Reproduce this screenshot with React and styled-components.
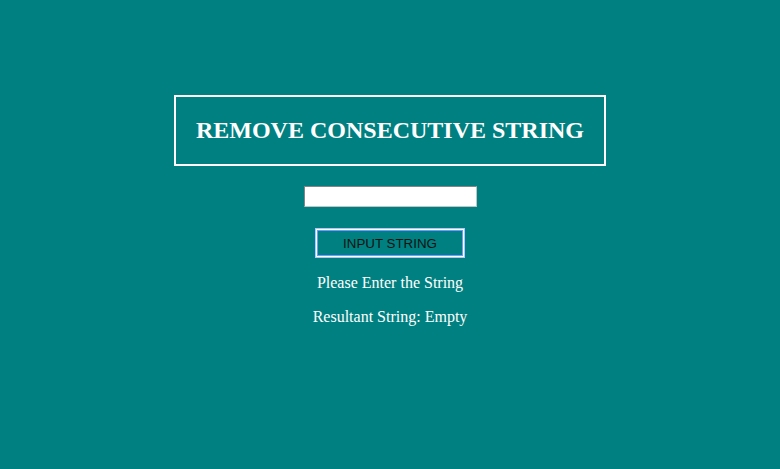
import React, { useState } from 'react';
import styled, { createGlobalStyle } from 'styled-components';

const GlobalStyle = createGlobalStyle`
  html, body {
    margin: 0;
    padding: 0;
    background: #008080;
  }
  body {
    font-family: 'Liberation Serif', 'Times New Roman', serif;
  }
`;

const Page = styled.div`
  min-height: 469px;
  display: flex;
  flex-direction: column;
  align-items: center;
  padding-top: 95px;
  box-sizing: border-box;
`;

const TitleBox = styled.div`
  border: 2px solid #ffffff;
  width: 432px;
  height: 71px;
  box-sizing: border-box;
  display: flex;
  align-items: center;
  justify-content: center;
`;

const Title = styled.h2`
  margin: 0;
  font-size: 24px;
  font-weight: bold;
  color: #ffffff;
`;

const TextInput = styled.input`
  margin-top: 20px;
  width: 173px;
  height: 21px;
  box-sizing: border-box;
  border: 1px solid;
  border-color: #858585 #c4c4c4 #c4c4c4 #858585;
  background: #ffffff;
  padding: 1px 2px;
  font-family: 'Liberation Sans', Arial, sans-serif;
  font-size: 13.33px;
  outline: none;
`;

const SubmitButton = styled.button`
  margin-top: 21px;
  width: 150px;
  height: 30px;
  box-sizing: border-box;
  background: transparent;
  border: 1px solid #a8c8ff;
  box-shadow: inset 0 0 0 1px #ffffff, inset 0 0 0 2px #6c9cff;
  color: #111111;
  font-family: 'Liberation Sans', Arial, sans-serif;
  font-size: 13.33px;
  padding: 0;
  cursor: pointer;
`;

const Message = styled.p`
  margin: 16px 0 0;
  color: #ffffff;
  font-size: 16px;
  line-height: 18px;
`;

const removeConsecutive = (s) =>
  s.split('').filter((c, i, arr) => i === 0 || c !== arr[i - 1]).join('');

export default function App() {
  const [value, setValue] = useState('');
  const [result, setResult] = useState('');

  return (
    <>
      <GlobalStyle />
      <Page>
        <TitleBox>
          <Title>REMOVE CONSECUTIVE STRING</Title>
        </TitleBox>
        <TextInput value={value} onChange={(e) => setValue(e.target.value)} />
        <SubmitButton onClick={() => setResult(removeConsecutive(value))}>
          INPUT STRING
        </SubmitButton>
        <Message>Please Enter the String</Message>
        <Message>Resultant String: {result || 'Empty'}</Message>
      </Page>
    </>
  );
}
